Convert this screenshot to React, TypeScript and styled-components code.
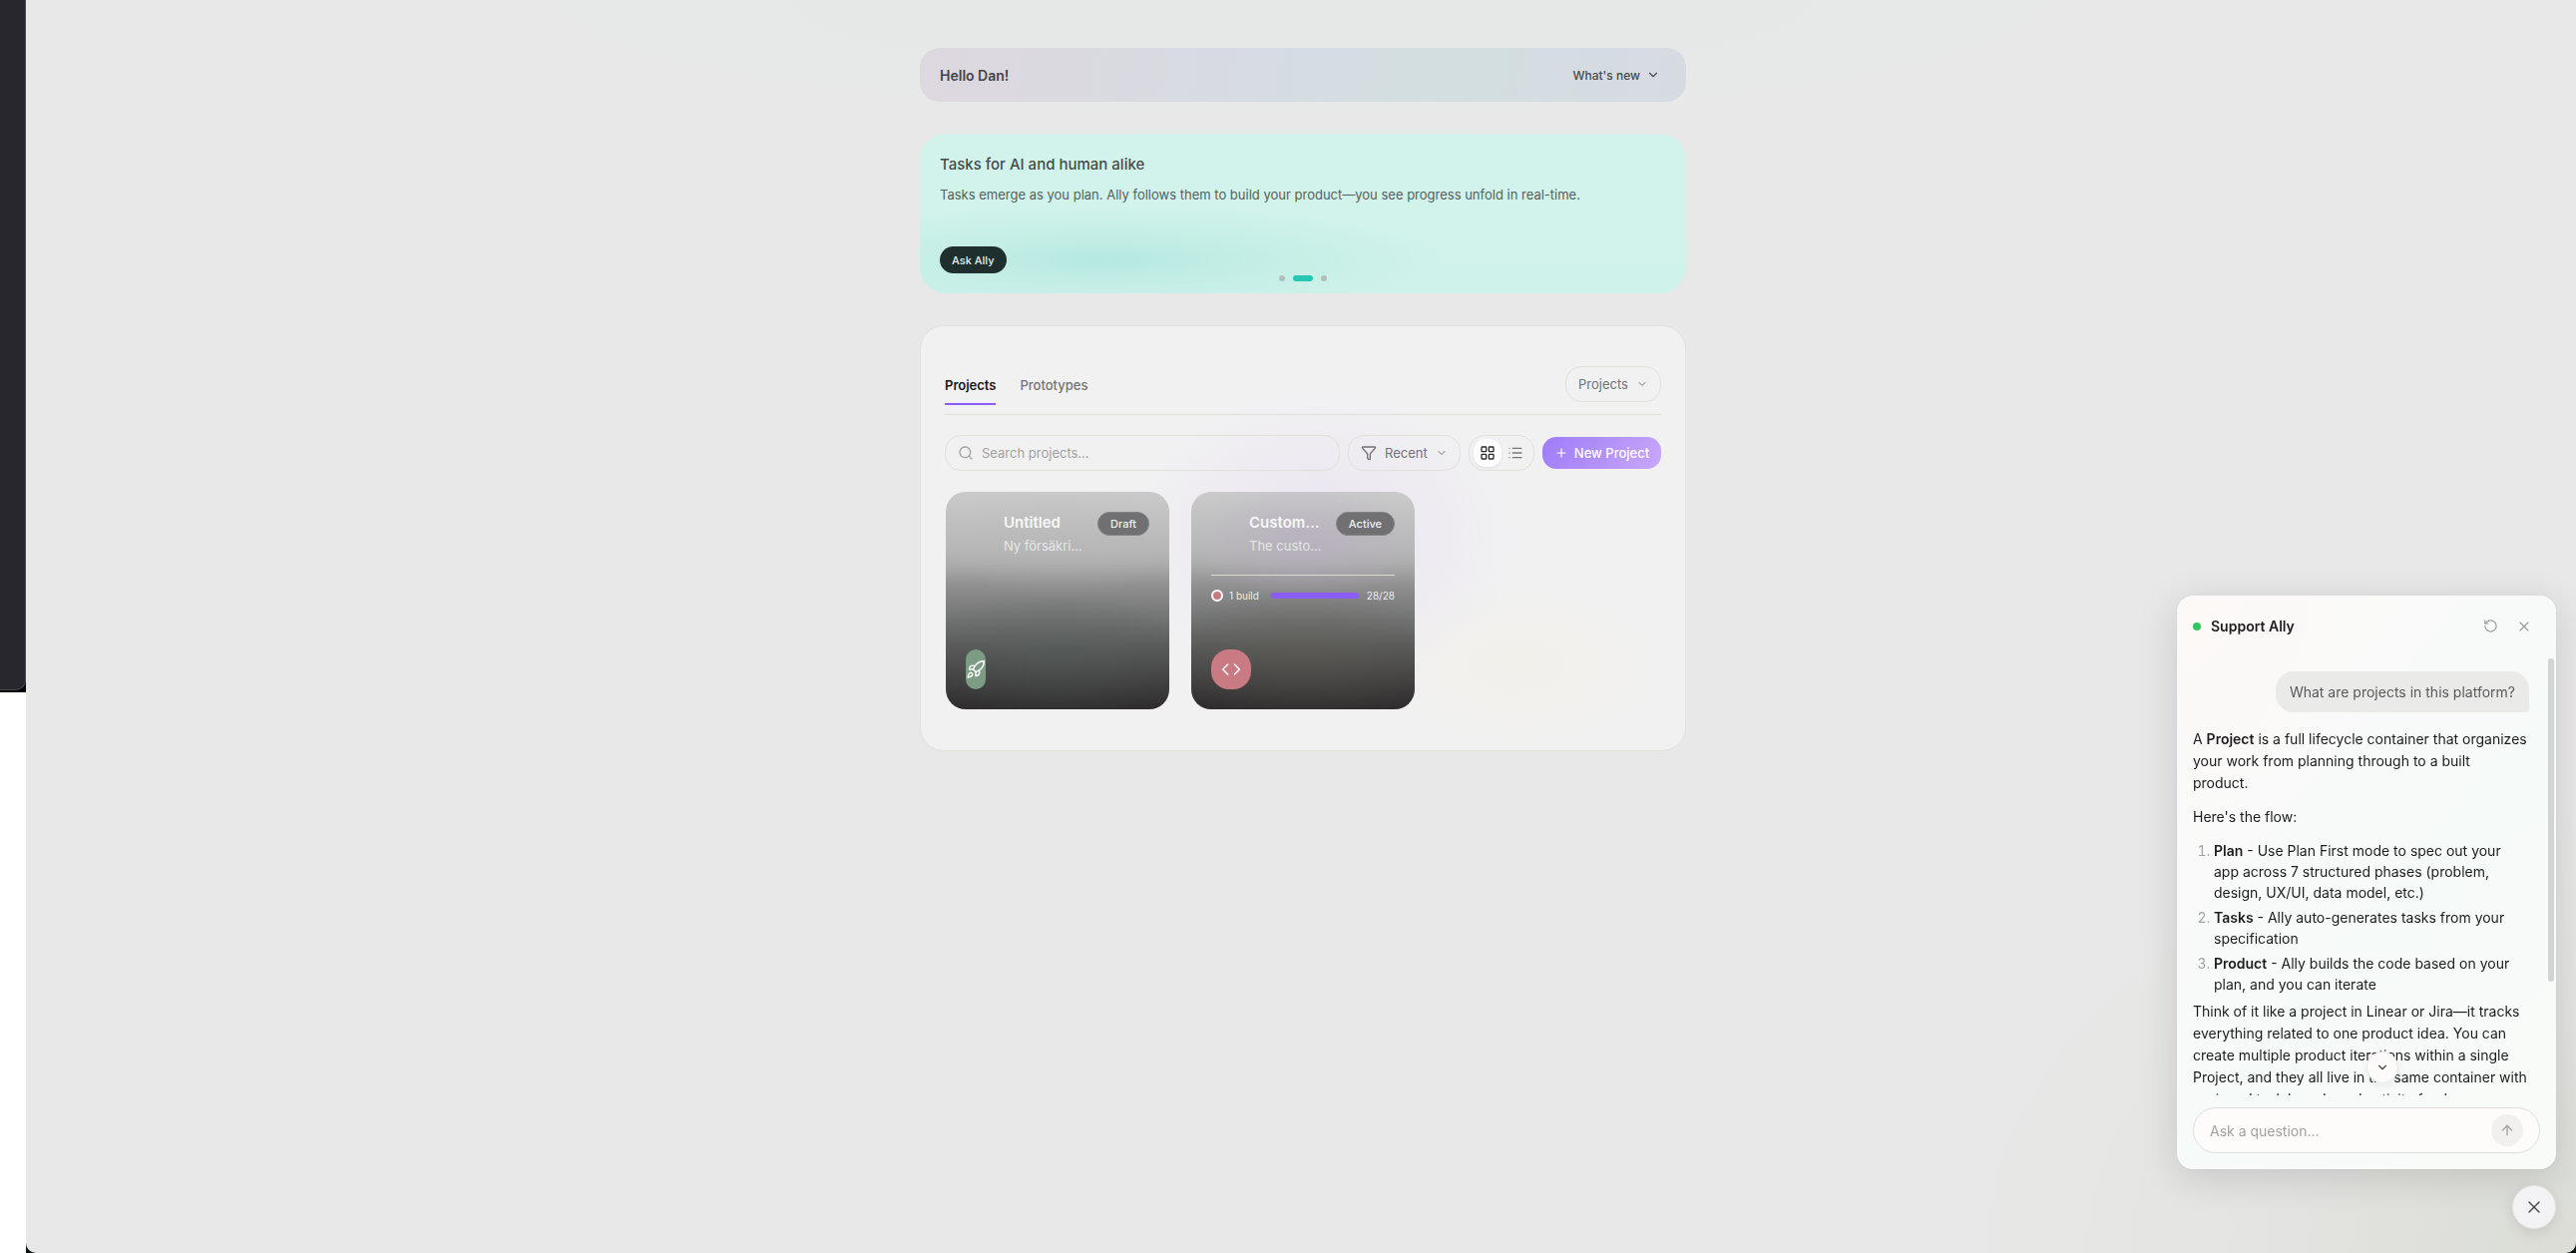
import React, { useState } from "react";
import styled, { createGlobalStyle, css } from "styled-components";
import {
  ArrowUp,
  ChevronDown,
  Code,
  Funnel,
  LayoutGrid,
  List,
  Plus,
  Rocket,
  RotateCcw,
  Search,
  X,
} from "lucide-react";

const GlobalStyle = createGlobalStyle`
  *, *::before, *::after { box-sizing: border-box; }
  body { margin: 0; background: #ffffff; }
  body, button, input, select {
    font-family: Inter, "Liberation Sans", sans-serif;
    font-size: 14px;
  }
  button, select { cursor: pointer; }
  h1, h2, h3, p, ol { margin: 0; font-weight: 400; }
`;

const Shell = styled.div`
  display: flex;
  min-height: 100vh;
`;

const Rail = styled.aside`
  flex: 0 0 26px;
  height: 694px;
  background: #000000;
`;

const RailSurface = styled.div`
  height: 692px;
  background: #28272d;
  border: solid #4a494f;
  border-width: 0 1px 1px 0;
  border-bottom-right-radius: 10px;
`;

const Backdrop = styled.div`
  flex: 1;
  display: flex;
  background: #0b1210;
`;

const Main = styled.main`
  flex: 1;
  padding: 48px 24px 48px 28px;
  border-radius: 0 0 10px 10px;
  background:
    radial-gradient(ellipse 640px 460px at 100% 100%, rgba(217, 219, 211, 0.9), rgba(224, 225, 220, 0.5) 50%, rgba(232, 232, 232, 0) 100%),
    radial-gradient(ellipse 900px 140px at 50% 0, rgba(228, 232, 230, 0.9), rgba(232, 232, 232, 0) 100%),
    #e8e8e8;
`;

const Column = styled.div`
  display: flex;
  flex-direction: column;
  gap: 32px;
  max-width: 768px;
  margin: 0 auto;
`;

const Greeting = styled.header`
  display: flex;
  align-items: center;
  justify-content: space-between;
  height: 54px;
  padding: 0 20px;
  border-radius: 20px;
  background: linear-gradient(100deg, #ded8e0 0%, #dad9e0 20%, #d7dbe1 38%, #d4dde1 54%, #d2dee0 70%, #d5dce1 88%, #d6dbe1 100%);
`;

const Hello = styled.h1`
  font-size: 14px;
  font-weight: 600;
  color: #444446;
`;

const WhatsNew = styled.button`
  display: flex;
  align-items: center;
  gap: 6px;
  padding: 4px 6px;
  border: 0;
  background: none;
  font-size: 12px;
  font-weight: 500;
  color: #48494c;
`;

const Banner = styled.section`
  position: relative;
  display: flex;
  flex-direction: column;
  align-items: flex-start;
  height: 160px;
  padding: 20px;
  border-radius: 26px;
  background:
    radial-gradient(ellipse 340px 56px at 24% 79%, #b5e9e1 0%, rgba(193, 237, 228, 0.8) 45%, rgba(209, 243, 235, 0) 100%),
    linear-gradient(180deg, #d2f3ec 0%, #d1f3eb 60%, #cff2ea 100%);
`;

const BannerTitle = styled.h2`
  font-size: 15px;
  line-height: 22px;
  font-weight: 500;
  color: #444b49;
`;

const BannerText = styled.p`
  margin-top: 8px;
  font-size: 13px;
  line-height: 22px;
  color: #56605d;
`;

const DarkPill = styled.button`
  height: 27px;
  margin-top: auto;
  padding: 0 12px;
  border: 0;
  border-radius: 14px;
  background: #1f2f2d;
  font-size: 11px;
  font-weight: 500;
  color: #e2f3ef;
`;

const Dots = styled.div`
  position: absolute;
  left: 0;
  right: 0;
  bottom: 12px;
  display: flex;
  justify-content: center;
  gap: 8px;
`;

const Dot = styled.button<{ $active?: boolean }>`
  width: ${(p) => (p.$active ? 20 : 6)}px;
  height: 6px;
  padding: 0;
  border: 0;
  border-radius: 3px;
  background: ${(p) => (p.$active ? "#27c7b5" : "#afbfbc")};
`;

const Panel = styled.section`
  padding: 40px 24px 41px;
  border: 1px solid #e4e1dc;
  border-radius: 24px;
  background:
    radial-gradient(ellipse 200px 150px at 52% 50%, rgba(232, 224, 240, 0.8), rgba(241, 241, 242, 0) 100%),
    radial-gradient(ellipse 170px 90px at 78% 80%, rgba(241, 240, 233, 0.9), rgba(241, 241, 240, 0) 100%),
    #f1f1f2;
`;

const TabsRow = styled.div`
  display: flex;
  align-items: flex-start;
  justify-content: space-between;
  padding-bottom: 12px;
  border-bottom: 1px solid #e0ded8;
`;

const Tabs = styled.div`
  display: flex;
  gap: 24px;
  height: 36px;
`;

const Tab = styled.button<{ $active?: boolean }>`
  height: 39px;
  padding: 0;
  border: 0;
  border-bottom: 2px solid ${(p) => (p.$active ? "#8b5cf6" : "transparent")};
  background: none;
  font-size: 13px;
  font-weight: ${(p) => (p.$active ? 600 : 500)};
  color: ${(p) => (p.$active ? "#18181b" : "#737375")};
`;

const outline = css`
  height: 36px;
  border: 1px solid #e2e0da;
  border-radius: 16px;
  color: #737375;
`;

const SelectBox = styled.label`
  ${outline}
  display: flex;
  align-items: center;
  gap: 8px;
  padding: 0 12px;
`;

const Select = styled.select<{ $width: number }>`
  width: ${(p) => p.$width}px;
  padding: 0;
  border: 0;
  outline: 0;
  appearance: none;
  background: none;
  font-size: 13px;
  color: inherit;
`;

const Toolbar = styled.div`
  display: flex;
  align-items: center;
  gap: 8px;
  margin: 20px 0;
`;

const SearchBox = styled.label`
  ${outline}
  flex: 1;
  display: flex;
  align-items: center;
  gap: 8px;
  padding: 0 12px;
  color: #a1a1a3;
`;

const TextInput = styled.input`
  flex: 1;
  min-width: 0;
  padding: 0;
  border: 0;
  outline: 0;
  background: none;
  font-size: 13px;
  color: #3f3f42;
  &::placeholder { color: #a1a1a1; opacity: 1; }
`;

const Toggle = styled.div`
  ${outline}
  display: flex;
  align-items: center;
  width: 66px;
  padding: 0 4px;
`;

const ToggleButton = styled.button<{ $active?: boolean }>`
  display: grid;
  place-items: center;
  width: 28px;
  height: 28px;
  padding: 0;
  border: 0;
  border-radius: 12px;
  background: ${(p) => (p.$active ? "#ffffff" : "transparent")};
  box-shadow: ${(p) => (p.$active ? "0 1px 3px rgba(0, 0, 0, 0.08)" : "none")};
  color: ${(p) => (p.$active ? "#2a2a2c" : "#7a7a7c")};
`;

const NewButton = styled.button`
  display: flex;
  align-items: center;
  justify-content: center;
  gap: 6px;
  width: 119px;
  height: 32px;
  padding: 0;
  border: 0;
  border-radius: 14px;
  background: linear-gradient(120deg, #a07cf8 0%, #b291f8 50%, #c9a8fa 100%);
  font-size: 13px;
  font-weight: 500;
  color: #ffffff;
`;

const Cards = styled.div`
  display: grid;
  grid-template-columns: repeat(3, minmax(0, 1fr));
  gap: 22px;
  padding: 1px 1px 0;
`;

const Card = styled.article<{ $glow: string; $low: string }>`
  display: flex;
  flex-direction: column;
  height: 218px;
  padding: 20px;
  border-radius: 20px;
  background:
    radial-gradient(ellipse 110px 60px at 50% 22%, ${(p) => p.$glow}, transparent 100%),
    radial-gradient(ellipse 130px 70px at 50% 75%, ${(p) => p.$low}, transparent 100%),
    linear-gradient(180deg, #cacacb 0%, #b6b6b7 27%, #adadad 33%, #919091 43%, #757676 57%, #585958 72%, #434242 86%, #2e2c2d 100%);
`;

const CardHead = styled.div`
  display: flex;
  align-items: flex-start;
  gap: 12px;
  padding-left: 38px;
`;

const CardText = styled.div`
  flex: 1;
  min-width: 0;
`;

const ellipsis = css`
  overflow: hidden;
  white-space: nowrap;
  text-overflow: ellipsis;
`;

const CardTitle = styled.h3`
  ${ellipsis}
  font-size: 15px;
  line-height: 22px;
  font-weight: 600;
  color: #f7f7f7;
`;

const CardSub = styled.p`
  ${ellipsis}
  font-size: 13px;
  line-height: 24px;
  color: #e6e6e8;
`;

const Badge = styled.span`
  height: 24px;
  padding: 0 12px;
  border: 1px solid #858486;
  border-radius: 12px;
  background: #706f71;
  font-size: 11px;
  line-height: 22px;
  font-weight: 500;
  color: #f0f0f0;
`;

const BuildRow = styled.div`
  display: flex;
  align-items: center;
  margin-top: 17px;
  padding-top: 12px;
  border-top: 1px solid #dcdad2;
  font-size: 10px;
  line-height: 16px;
  color: #ececec;
`;

const BuildDot = styled.span`
  width: 12px;
  height: 12px;
  margin-right: 6px;
  border: 2px solid #ffffff;
  border-radius: 50%;
  background: #c97880;
`;

const Bar = styled.span`
  flex: 1;
  height: 6px;
  margin: 0 8px 0 12px;
  border-radius: 3px;
  background: #8b5cf6;
`;

const CardIcon = styled.div<{ $color: string; $narrow?: boolean }>`
  display: grid;
  place-items: center;
  width: ${(p) => (p.$narrow ? 20 : 40)}px;
  height: 40px;
  margin-top: auto;
  border-radius: ${(p) => (p.$narrow ? 10 : 18)}px;
  background: ${(p) => p.$color};
  color: #ffffff;
`;

const Chat = styled.aside`
  position: fixed;
  right: 20px;
  bottom: 84px;
  display: flex;
  flex-direction: column;
  width: 380px;
  height: 575px;
  border-radius: 16px;
  background:
    radial-gradient(ellipse 180px 220px at 0 0, rgba(253, 248, 246, 0.8) 0%, rgba(251, 250, 248, 0) 100%),
    linear-gradient(130deg, #fbfaf8 0%, #f9faf9 30%, #f6faf9 55%, #f9fbf8 100%);
  box-shadow: 0 8px 40px rgba(0, 0, 0, 0.14), 0 0 1px rgba(0, 0, 0, 0.2);
`;

const ChatHead = styled.header`
  display: flex;
  align-items: center;
  height: 61px;
  padding: 0 20px 0 16px;
`;

const Online = styled.span`
  width: 8px;
  height: 8px;
  margin-right: 10px;
  border-radius: 50%;
  background: #34c65b;
`;

const ChatTitle = styled.h2`
  flex: 1;
  font-size: 14px;
  font-weight: 600;
  color: #1c1c1e;
`;

const IconButton = styled.button`
  display: grid;
  place-items: center;
  width: 24px;
  height: 24px;
  margin-left: 10px;
  padding: 0;
  border: 0;
  background: none;
  color: #98999a;
`;

const ChatBody = styled.div`
  position: relative;
  flex: 1;
  min-height: 0;
  display: flex;
`;

const Messages = styled.div`
  flex: 1;
  display: flex;
  flex-direction: column;
  padding: 15px 5px 0 16px;
  overflow: hidden;
  font-size: 14px;
  line-height: 22px;
  color: #1c1c1e;
  strong { font-weight: 600; }
`;

const Scrollbar = styled.div`
  flex: 0 0 6px;
  height: 324px;
  margin: 2px 2px 0 0;
  border-radius: 3px;
  background: #d0d4d3;
`;

const Bubble = styled.p`
  align-self: flex-end;
  margin: 0 14px 16px 0;
  padding: 10px 14px 9px;
  border-radius: 18px 18px 4px 18px;
  background: #eaebe9;
  color: #58595b;
`;

const Para = styled.p`
  flex: none;
  margin-right: 14px;
  margin-bottom: 12px;
`;

const Steps = styled.ol`
  flex: none;
  margin: 0 14px 6px 0;
  padding-left: 21px;
  line-height: 21px;
`;

const Step = styled.li`
  margin-bottom: 4px;
  &:last-child { margin-bottom: 0; }
  &::marker { color: #a3a5a5; }
`;

const round = css`
  display: grid;
  place-items: center;
  padding: 0;
  border-radius: 50%;
`;

const ScrollDown = styled.button`
  ${round}
  position: absolute;
  left: 190px;
  bottom: 12px;
  width: 32px;
  height: 32px;
  border: 1px solid #ebe9e7;
  background: #fdfbfa;
  color: #444446;
  box-shadow: 0 3px 10px rgba(0, 0, 0, 0.07);
`;

const Composer = styled.form`
  padding: 12px 16px 16px;
`;

const ComposerField = styled.label`
  display: flex;
  align-items: center;
  height: 46px;
  padding: 0 16px;
  border: 1px solid #dfdedb;
  border-radius: 23px;
  background: #fdfcfa;
`;

const AskInput = styled(TextInput)`
  font-size: 14px;
`;

const Send = styled.button`
  ${round}
  width: 32px;
  height: 32px;
  border: 0;
  background: #f1f0ee;
  color: #a3a3a3;
`;

const Fab = styled.button`
  ${round}
  position: fixed;
  right: 20px;
  bottom: 24px;
  width: 44px;
  height: 44px;
  border: 1px solid #e4e4e6;
  background: #f3f3f6;
  color: #48484a;
  box-shadow: 0 4px 14px rgba(0, 0, 0, 0.1);
`;

export default function App() {
  const [tab, setTab] = useState("Projects");
  const [view, setView] = useState("grid");
  return (
    <>
      <GlobalStyle />
      <Shell>
        <Rail><RailSurface /></Rail>
        <Backdrop>
          <Main>
            <Column>
              <Greeting>
                <Hello>Hello Dan!</Hello>
                <WhatsNew>What's new <ChevronDown size={14} /></WhatsNew>
              </Greeting>

              <Banner>
                <BannerTitle>Tasks for AI and human alike</BannerTitle>
                <BannerText>
                  Tasks emerge as you plan. Ally follows them to build your product—you see progress unfold in real-time.
                </BannerText>
                <DarkPill>Ask Ally</DarkPill>
                <Dots>
                  <Dot aria-label="Slide 1" />
                  <Dot aria-label="Slide 2" $active />
                  <Dot aria-label="Slide 3" />
                </Dots>
              </Banner>

              <Panel>
                <TabsRow>
                  <Tabs>
                    {["Projects", "Prototypes"].map((name) => (
                      <Tab key={name} $active={tab === name} onClick={() => setTab(name)}>{name}</Tab>
                    ))}
                  </Tabs>
                  <SelectBox>
                    <Select aria-label="Show" $width={50}><option>Projects</option></Select>
                    <ChevronDown size={12} />
                  </SelectBox>
                </TabsRow>

                <Toolbar>
                  <SearchBox>
                    <Search size={16} />
                    <TextInput type="text" aria-label="Search projects" placeholder="Search projects..." />
                  </SearchBox>
                  <SelectBox>
                    <Funnel size={16} />
                    <Select aria-label="Sort" $width={43}><option>Recent</option></Select>
                    <ChevronDown size={12} />
                  </SelectBox>
                  <Toggle>
                    <ToggleButton aria-label="Grid view" $active={view === "grid"} onClick={() => setView("grid")}>
                      <LayoutGrid size={16} />
                    </ToggleButton>
                    <ToggleButton aria-label="List view" $active={view === "list"} onClick={() => setView("list")}>
                      <List size={16} />
                    </ToggleButton>
                  </Toggle>
                  <NewButton><Plus size={14} />New Project</NewButton>
                </Toolbar>

                <Cards>
                  <Card $glow="rgba(184, 184, 184, 0.3)" $low="rgba(84, 96, 92, 0.35)">
                    <CardHead>
                      <CardText>
                        <CardTitle>Untitled</CardTitle>
                        <CardSub>Ny försäkringsapp</CardSub>
                      </CardText>
                      <Badge>Draft</Badge>
                    </CardHead>
                    <CardIcon $color="#7d9c84" $narrow><Rocket size={20} strokeWidth={1.75} /></CardIcon>
                  </Card>
                  <Card $glow="rgba(184, 172, 194, 0.6)" $low="rgba(98, 94, 84, 0.35)">
                    <CardHead>
                      <CardText>
                        <CardTitle>Customer portal</CardTitle>
                        <CardSub>The customer portal</CardSub>
                      </CardText>
                      <Badge>Active</Badge>
                    </CardHead>
                    <BuildRow>
                      <BuildDot />1 build<Bar />28/28
                    </BuildRow>
                    <CardIcon $color="#c97a82"><Code size={20} strokeWidth={1.75} /></CardIcon>
                  </Card>
                </Cards>
              </Panel>
            </Column>
          </Main>
        </Backdrop>
      </Shell>

      <Chat>
        <ChatHead>
          <Online />
          <ChatTitle>Support Ally</ChatTitle>
          <IconButton aria-label="Restart chat"><RotateCcw size={15} strokeWidth={1.75} /></IconButton>
          <IconButton aria-label="Close chat"><X size={16} strokeWidth={1.75} /></IconButton>
        </ChatHead>
        <ChatBody>
          <Messages>
            <Bubble>What are projects in this platform?</Bubble>
            <Para>
              A <strong>Project</strong> is a full lifecycle container that organizes your work from planning through to a built product.
            </Para>
            <Para>Here's the flow:</Para>
            <Steps>
              <Step><strong>Plan</strong> - Use Plan First mode to spec out your app across 7 structured phases (problem, design, UX/UI, data model, etc.)</Step>
              <Step><strong>Tasks</strong> - Ally auto-generates tasks from your specification</Step>
              <Step><strong>Product</strong> - Ally builds the code based on your plan, and you can iterate</Step>
            </Steps>
            <Para>
              Think of it like a project in Linear or Jira—it tracks everything related to one product idea. You can create multiple product iterations within a single Project, and they all live in the same container with assigned task boards and activity feeds.
            </Para>
          </Messages>
          <Scrollbar />
          <ScrollDown aria-label="Scroll to latest"><ChevronDown size={14} /></ScrollDown>
        </ChatBody>
        <Composer onSubmit={(e) => e.preventDefault()}>
          <ComposerField>
            <AskInput type="text" aria-label="Ask a question" placeholder="Ask a question..." />
            <Send aria-label="Send"><ArrowUp size={16} /></Send>
          </ComposerField>
        </Composer>
      </Chat>
      <Fab aria-label="Close support"><X size={20} strokeWidth={1.75} /></Fab>
    </>
  );
}
